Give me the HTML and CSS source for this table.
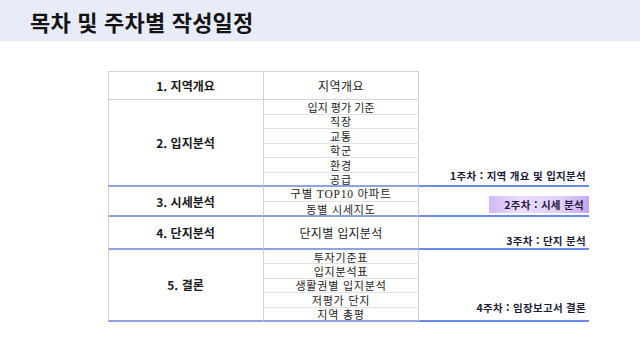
FILE: index.html
```html
<!DOCTYPE html>
<html lang="ko">
<head>
<meta charset="utf-8">
<title>목차 및 주차별 작성일정</title>
<link rel="stylesheet" href="styles.css">
</head>
<body>
<header class="titlebar"><h1 class="title">목차 및 주차별 작성일정</h1></header>
<main class="sched">
  <div class="l l1">1. 지역개요</div>
  <div class="m m1">지역개요</div>

  <div class="l l2">2. 입지분석</div>
  <div class="m tight">입지 평가 기준</div>
  <div class="m">직장</div>
  <div class="m">교통</div>
  <div class="m">학군</div>
  <div class="m">환경</div>
  <div class="m m-end">공급</div>
  <div class="r r1"><span class="lbl lbl1">1주차 : 지역 개요 및 입지분석</span></div>

  <div class="l l3">3. 시세분석</div>
  <div class="m"><span class="serif">구별 TOP10 아파트</span></div>
  <div class="m m-end">동별 시세지도</div>
  <div class="r r2"><span class="lbl box">2주차 : 시세 분석</span></div>

  <div class="l l4">4. 단지분석</div>
  <div class="m m-end m4">단지별 입지분석</div>
  <div class="r r3"><span class="lbl lbl3">3주차 : 단지 분석</span></div>

  <div class="l l5">5. 결론</div>
  <div class="m">투자기준표</div>
  <div class="m">입지분석표</div>
  <div class="m">생활권별 입지분석</div>
  <div class="m">저평가 단지</div>
  <div class="m m-end">지역 총평</div>
  <div class="r r4"><span class="lbl lbl4">4주차 : 임장보고서 결론</span></div>
</main>
</body>
</html>
```
FILE: styles.css
```css
* { box-sizing: border-box; }
html, body { margin: 0; padding: 0; background: #ffffff; }
body {
  width: 640px;
  height: 360px;
  overflow: hidden;
  font-family: "Noto Sans CJK KR", "Noto Sans", sans-serif;
  color: #1e1e1e;
}
.titlebar {
  height: 41px;
  background: #e8ecf9;
  display: flex;
  align-items: center;
  padding-left: 30px;
}
.title {
  margin: 0;
  font-size: 22px;
  font-weight: 700;
  line-height: 1;
  color: #141414;
  letter-spacing: 0.2px;
}
.sched {
  margin: 30px 0 0 108px;
  display: grid;
  grid-template-columns: 156px 155px 170px;
  grid-template-rows: 29px repeat(6, 14.5px) repeat(2, 15px) 33px repeat(5, 14.4px);
}
.l {
  grid-column: 1;
  border-left: 1px solid #d2d2d2;
  border-right: 1px solid #d2d2d2;
  border-bottom: 2px solid #8ea2de;
  display: flex;
  align-items: center;
  justify-content: center;
  font-size: 12px;
  font-weight: 700;
  color: #1a1a1a;
  padding-right: 1px;
}
.l1 { grid-row: 1; border-top: 1px solid #d2d2d2; border-bottom: 1px solid #d2d2d2; }
.l2 { grid-row: 2 / 8; }
.l3 { grid-row: 8 / 10; }
.l4 { grid-row: 10; }
.l5 { grid-row: 11 / 16; }

.m {
  grid-column: 2;
  border-right: 1px solid #d2d2d2;
  border-bottom: 1px solid #e2e2e2;
  display: flex;
  align-items: center;
  justify-content: center;
  font-size: 11px;
  line-height: 12px;
  letter-spacing: 0.8px;
  color: #222222;
  white-space: nowrap;
  overflow: visible;
}
.m1 {
  border-top: 1px solid #d2d2d2;
  border-bottom: 1px solid #d2d2d2;
  font-size: 12px;
  letter-spacing: 0.4px;
}
.m4 { font-size: 12px; letter-spacing: 0.3px; }
.tight { letter-spacing: 0; }
.m-end { border-bottom: 2px solid #8ea2de; }
.serif { font-family: "Liberation Serif", "Noto Sans CJK KR", serif; font-size: 11.5px; }

.r {
  grid-column: 3;
  border-bottom: 2px solid #6b8be8;
  display: flex;
  align-items: flex-end;
  justify-content: flex-end;
}
.r1 { grid-row: 1 / 8; }
.r2 { grid-row: 8 / 10; }
.r3 { grid-row: 10; }
.r4 { grid-row: 11 / 16; }

.lbl {
  font-size: 10.5px;
  font-weight: 700;
  line-height: 12px;
  color: #1b1b38;
  white-space: nowrap;
  padding-right: 3px;
  letter-spacing: 0.3px;
}
.lbl1 { padding-bottom: 3px; }
.lbl3 { padding-bottom: 1px; }
.lbl4 { padding-bottom: 6px; }
.box {
  width: 100px;
  height: 17px;
  margin-bottom: 2px;
  padding-right: 5px;
  display: flex;
  align-items: center;
  justify-content: flex-end;
  background: linear-gradient(90deg, #d2b8f6 0%, #eadcfd 30%, #e2d0fb 70%, #c7a6f1 100%);
}
```
